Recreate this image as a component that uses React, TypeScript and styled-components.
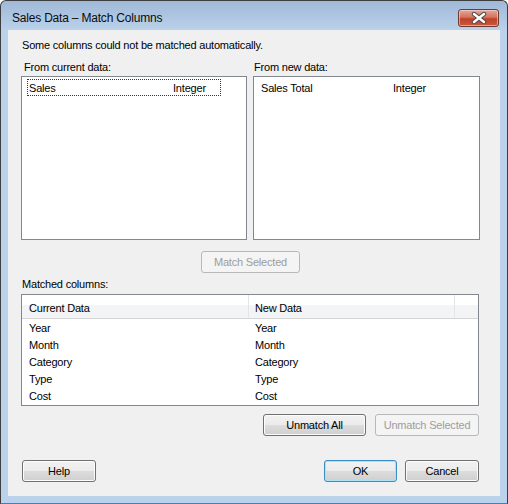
import * as React from 'react'
import styled, { createGlobalStyle, css } from 'styled-components'

const GlobalStyle = createGlobalStyle`
    html, body {
        margin: 0;
        padding: 0;
        background: #ffffff;
    }
    * {
        box-sizing: border-box;
    }
`

const Window = styled.div`
    width: 508px;
    height: 504px;
    display: flex;
    flex-direction: column;
    border: 1px solid #3d3d3d;
    border-bottom-color: #2a8fb4;
    border-radius: 6px 6px 0 0;
    background: linear-gradient(to bottom, #9fb9d8 0px, #bcd2ea 30px, #bad2eb 100%);
    font-family: 'Liberation Sans', Arial, sans-serif;
    font-size: 11px;
    letter-spacing: -0.2px;
    color: #000000;
    overflow: hidden;
`

const TitleBar = styled.div`
    height: 29px;
    flex-shrink: 0;
    display: flex;
    align-items: center;
    justify-content: space-between;
    padding: 5px 8px 0 11px;
`

const Title = styled.span`
    font-size: 12px;
    line-height: 15px;
    color: #0b0b0b;
`

const CloseButton = styled.div`
    width: 41px;
    height: 18px;
    display: flex;
    align-items: center;
    justify-content: center;
    border: 1px solid #6e3a32;
    border-radius: 3px;
    background: linear-gradient(to bottom, #e3a89c 0%, #d4735f 45%, #c24128 55%, #c65a3e 100%);
    box-shadow: inset 0 0 0 1px rgba(255, 220, 210, 0.55);
`

const Client = styled.div`
    flex: 1;
    margin: 0 7px 7px 7px;
    background: #f0f0f0;
    padding: 9px 21px 14px 13px;
    display: flex;
    flex-direction: column;
`

const Text = styled.div<{ $indent?: number }>`
    line-height: 13px;
    padding-left: ${props => props.$indent || 0}px;
    white-space: nowrap;
`

const Columns = styled.div`
    display: grid;
    grid-template-columns: 226px 227px;
    column-gap: 6px;
    margin-top: 9px;
`

const Column = styled.div`
    display: flex;
    flex-direction: column;
    gap: 2px;
`

const ListBox = styled.div`
    height: 164px;
    background: #ffffff;
    border: 1px solid #828790;
`

const ListRow = styled.div<{ $focused?: boolean }>`
    display: flex;
    width: 194px;
    height: 17px;
    margin: 2px 0 0 5px;
    align-items: center;
    border: 1px ${props => (props.$focused ? 'dotted #333333' : 'solid transparent')};
`

const ListCell = styled.span<{ $width?: number }>`
    padding-left: 1px;
    white-space: nowrap;
    ${props =>
        props.$width &&
        css`
            width: ${props.$width}px;
            flex-shrink: 0;
        `}
`

const Button = styled.div<{ $width: number; $default?: boolean; $disabled?: boolean }>`
    width: ${props => props.$width}px;
    height: 22px;
    flex-shrink: 0;
    display: flex;
    align-items: center;
    justify-content: center;
    border: 1px solid #707070;
    border-radius: 3px;
    background: linear-gradient(to bottom, #f2f2f2 0%, #ebebeb 50%, #dddddd 50%, #cfcfcf 100%);
    box-shadow: inset 0 0 0 1px #fcfcfc;
    white-space: nowrap;
    ${props =>
        props.$default &&
        css`
            border-color: #3c8cc4;
            box-shadow: inset 0 0 0 1px #a8e3fa;
        `}
    ${props =>
        props.$disabled &&
        css`
            border-color: #b5b9bc;
            background: #f4f4f4;
            box-shadow: none;
            color: #9d9d9d;
        `}
`

const MatchButton = styled(Button)`
    align-self: center;
    margin-top: 11px;
    margin-left: 1px;
`

const MatchedLabel = styled(Text)`
    margin-top: 5px;
`

const GridBox = styled.div`
    height: 112px;
    margin-top: 3px;
    background: #ffffff;
    border: 1px solid #828790;
`

const GridHeader = styled.div`
    display: flex;
    height: 24px;
    border-bottom: 1px solid #d5d5d5;
    background: linear-gradient(to bottom, #ffffff 0%, #ffffff 42%, #f3f4f6 46%, #f3f4f6 100%);
`

const HeaderCell = styled.div<{ $width?: number; $pad?: number }>`
    ${props =>
        props.$width
            ? css`
                  width: ${props.$width}px;
                  flex-shrink: 0;
              `
            : css`
                  flex: 1;
              `}
    padding: 3px 0 0 ${props => props.$pad || 0}px;
    line-height: 20px;
    border-right: ${props => (props.$width ? '1px solid #e3e5e8' : 'none')};
`

const GridRows = styled.div`
    padding-top: 1px;
`

const GridRow = styled.div`
    display: flex;
    height: 17px;
    line-height: 17px;
`

const GridCell = styled.div<{ $width: number; $pad: number }>`
    width: ${props => props.$width}px;
    padding-left: ${props => props.$pad}px;
    white-space: nowrap;
`

const ButtonRow = styled.div`
    display: flex;
    justify-content: flex-end;
    gap: 9px;
    margin-top: 8px;
`

const Footer = styled.div`
    display: flex;
    justify-content: space-between;
    margin-top: auto;
    padding-left: 1px;
`

const FooterGroup = styled.div`
    display: flex;
    gap: 8px;
`

const CloseGlyph = () => (
    <svg width="16" height="12" viewBox="0 0 16 12">
        <path d="M3 2 L13 10 M13 2 L3 10" stroke="#4b4b4b" strokeWidth="4.4" strokeLinecap="round" />
        <path d="M3 2 L13 10 M13 2 L3 10" stroke="#ffffff" strokeWidth="2.4" strokeLinecap="round" />
    </svg>
)

const matched = ['Year', 'Month', 'Category', 'Type', 'Cost']

const App: React.FunctionComponent = () => {
    return (
        <>
            <GlobalStyle />
            <Window>
                <TitleBar>
                    <Title>Sales Data – Match Columns</Title>
                    <CloseButton>
                        <CloseGlyph />
                    </CloseButton>
                </TitleBar>
                <Client>
                    <Text $indent={1}>Some columns could not be matched automatically.</Text>
                    <Columns>
                        <Column>
                            <Text $indent={3}>From current data:</Text>
                            <ListBox>
                                <ListRow $focused>
                                    <ListCell $width={144}>Sales</ListCell>
                                    <ListCell>Integer</ListCell>
                                </ListRow>
                            </ListBox>
                        </Column>
                        <Column>
                            <Text $indent={1}>From new data:</Text>
                            <ListBox>
                                <ListRow>
                                    <ListCell $width={132}>Sales Total</ListCell>
                                    <ListCell>Integer</ListCell>
                                </ListRow>
                            </ListBox>
                        </Column>
                    </Columns>
                    <MatchButton $width={99} $disabled>
                        Match Selected
                    </MatchButton>
                    <MatchedLabel $indent={1}>Matched columns:</MatchedLabel>
                    <GridBox>
                        <GridHeader>
                            <HeaderCell $width={227} $pad={7}>
                                Current Data
                            </HeaderCell>
                            <HeaderCell $width={206} $pad={6}>
                                New Data
                            </HeaderCell>
                            <HeaderCell />
                        </GridHeader>
                        <GridRows>
                            {matched.map(name => (
                                <GridRow key={name}>
                                    <GridCell $width={227} $pad={7}>
                                        {name}
                                    </GridCell>
                                    <GridCell $width={206} $pad={6}>
                                        {name}
                                    </GridCell>
                                </GridRow>
                            ))}
                        </GridRows>
                    </GridBox>
                    <ButtonRow>
                        <Button $width={103}>Unmatch All</Button>
                        <Button $width={104} $disabled>
                            Unmatch Selected
                        </Button>
                    </ButtonRow>
                    <Footer>
                        <Button $width={74}>Help</Button>
                        <FooterGroup>
                            <Button $width={73} $default>
                                OK
                            </Button>
                            <Button $width={74}>Cancel</Button>
                        </FooterGroup>
                    </Footer>
                </Client>
            </Window>
        </>
    )
}

export default App
